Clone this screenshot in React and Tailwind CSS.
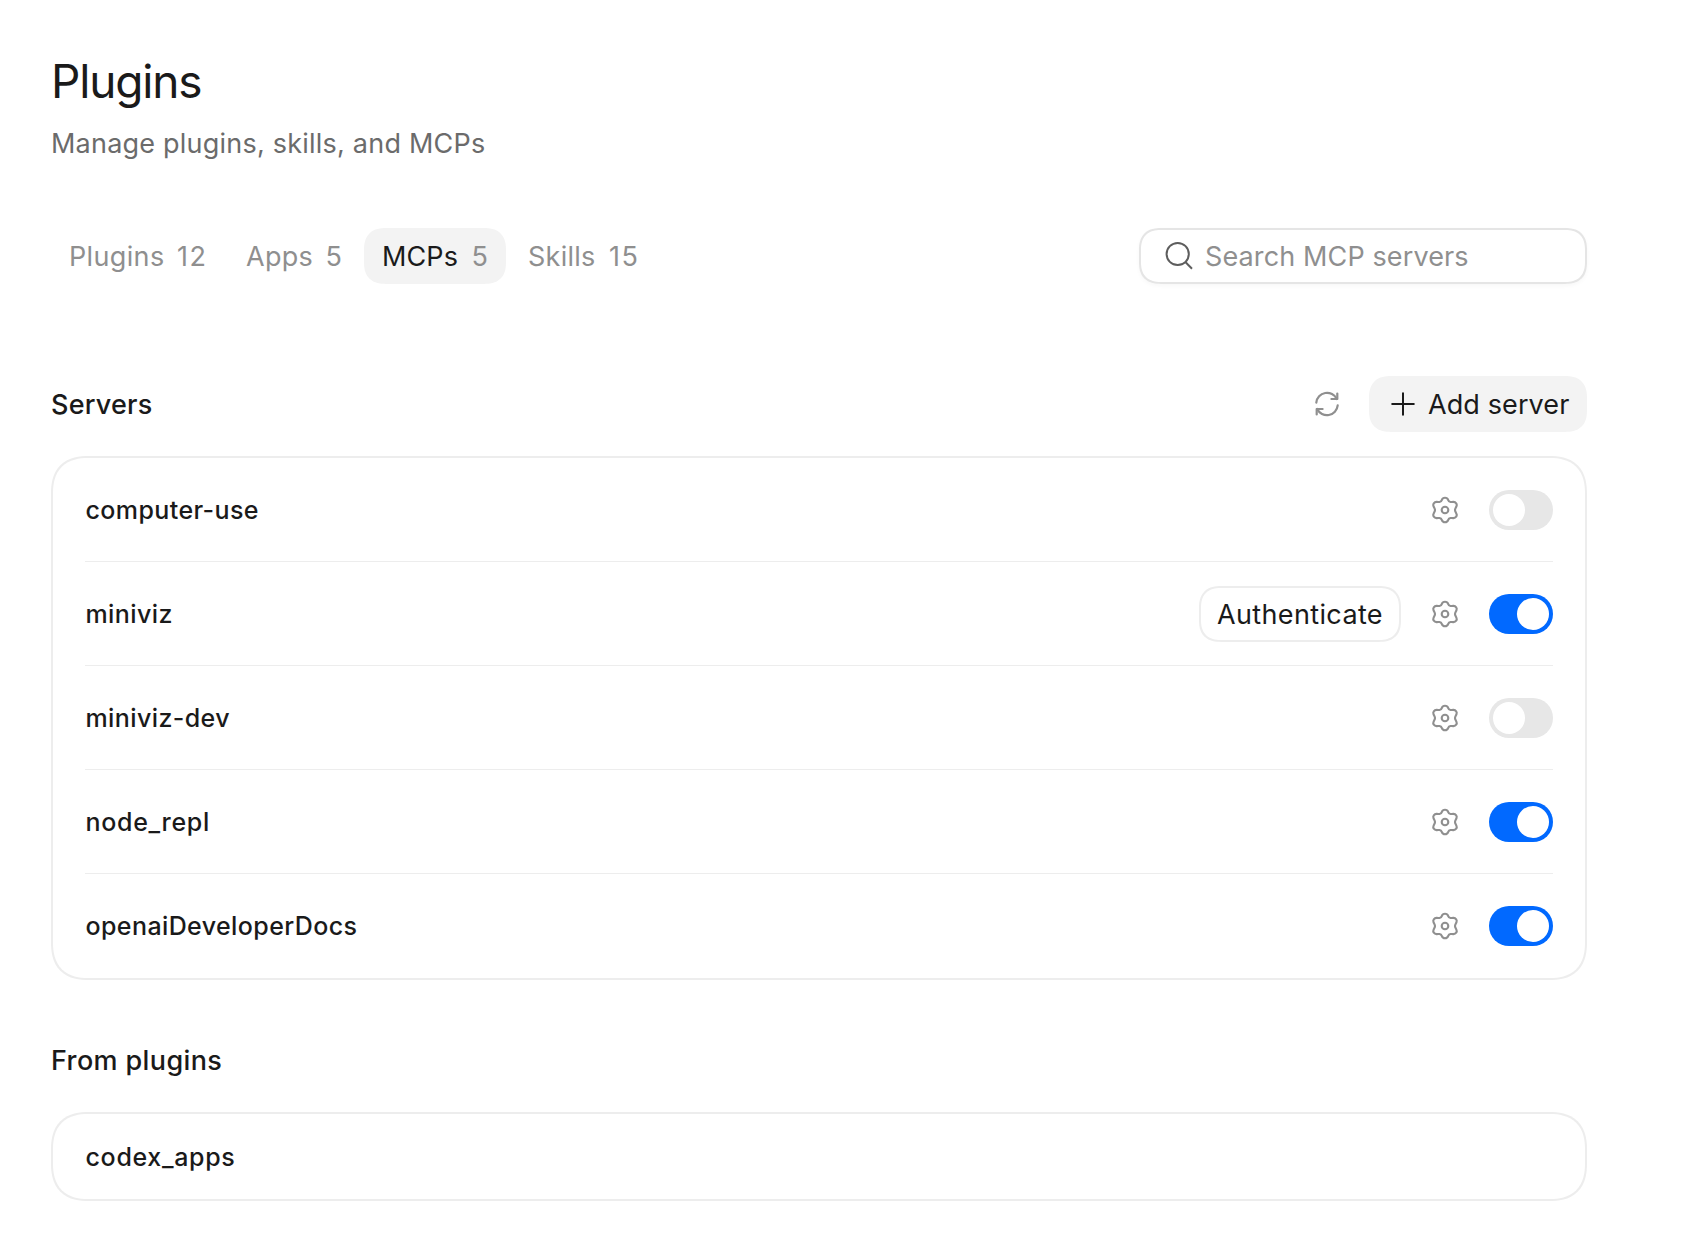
import React, { useState } from "react";

const tabs = [
  { name: "Plugins", count: 12, width: "w-[173px]", tracking: "tracking-[0.35px]" },
  { name: "Apps", count: 5, width: "w-[132px]", tracking: "tracking-[0.3px]" },
  { name: "MCPs", count: 5, width: "w-[142px]", tracking: "tracking-[0.1px]" },
  { name: "Skills", count: 15, width: "w-[146px]", tracking: "tracking-[0.25px]" },
];

const initialServers = [
  { name: "computer-use", enabled: false },
  { name: "miniviz", enabled: true, needsAuth: true },
  { name: "miniviz-dev", enabled: false },
  { name: "node_repl", enabled: true },
  { name: "openaiDeveloperDocs", enabled: true },
];

const SearchIcon = () => (
  <svg width="30" height="30" viewBox="0 0 30 30" fill="none" stroke="#5d5d5d" strokeWidth="2" className="shrink-0">
    <circle cx="13.7" cy="13" r="11.1" />
    <path d="M21.6 21.2 28 27.7" />
  </svg>
);

const RefreshIcon = () => (
  <svg width="28" height="28" viewBox="-14 -14 28 28" fill="none" stroke="#8f8f8f" strokeWidth="2.2" strokeLinecap="round" strokeLinejoin="round">
    <path d="M-10.7-1.4A10.8 10.8 0 0 1 9.8-5" />
    <path d="M10.3-10.5V-5H4.4" />
    <path d="M10.7 1.4A10.8 10.8 0 0 1-9.8 5" />
    <path d="M-10.3 10.5V5H-4.4" />
  </svg>
);

const PlusIcon = () => (
  <svg width="24" height="24" viewBox="0 0 24 24" fill="none" stroke="#1a1a1a" strokeWidth="2" strokeLinecap="round">
    <path d="M12 1.2v21.6M1.2 12h21.6" />
  </svg>
);

const GearIcon = () => (
  <svg width="28" height="28" viewBox="-14 -14 28 28" fill="none" stroke="#8f8f8f" strokeWidth="2.1" strokeLinejoin="round">
    <path d="M0-12.2C1.9-12.2 2.7-11.3 3.1-10.1C3.6-8.6 4.3-8.1 5.5-8C6.5-7.9 7.4-8.2 8.4-8.1C10.9-7.9 12.3-6 11.5-3.9C11.1-2.6 10-1.6 10 0C10 1.6 11.1 2.6 11.5 3.9C12.3 6 10.9 7.9 8.4 8.1C7.4 8.2 6.5 7.9 5.5 8C4.3 8.1 3.6 8.6 3.1 10.1C2.7 11.3 1.9 12.2 0 12.2C-1.9 12.2-2.7 11.3-3.1 10.1C-3.6 8.6-4.3 8.1-5.5 8C-6.5 7.9-7.4 8.2-8.4 8.1C-10.9 7.9-12.3 6-11.5 3.9C-11.1 2.6-10 1.6-10 0C-10-1.6-11.1-2.6-11.5-3.9C-12.3-6-10.9-7.9-8.4-8.1C-7.4-8.2-6.5-7.9-5.5-8C-4.3-8.1-3.6-8.6-3.1-10.1C-2.7-11.3-1.9-12.2 0-12.2Z" />
    <circle r="3.3" />
  </svg>
);

const Toggle = ({ on, onClick, label }) => (
  <button
    role="switch"
    aria-checked={on}
    aria-label={label}
    onClick={onClick}
    className={`flex h-10 w-16 items-center rounded-full px-1 ${on ? "justify-end bg-[#0169ff]" : "justify-start bg-[#e7e7e7]"}`}
  >
    <span className="size-8 rounded-full bg-white" />
  </button>
);

// names with an underscore are set a little wider
const ServerName = ({ name }) => (
  <span className={`pl-[0.5px] pt-0.5 text-[25px] font-medium ${name.includes("_") ? "tracking-[0.68px]" : "tracking-[0.4px]"}`}>
    {name}
  </span>
);

const App = () => {
  const [activeTab, setActiveTab] = useState("MCPs");
  const [servers, setServers] = useState(initialServers);

  const toggleServer = name => {
    setServers(servers.map(s => (s.name === name ? { ...s, enabled: !s.enabled } : s)));
  };

  return (
    <div className="min-h-screen bg-white pl-[51px] pr-[117px] pt-[53px] font-['Inter',sans-serif] text-[27px] text-[#1a1a1a]">
      <h1 className="h-14 text-[46px] leading-[56px] tracking-[-1.15px]">Plugins</h1>
      <p className="mt-[15px] h-10 leading-10 tracking-[0.22px] text-[#6b6b6b]">Manage plugins, skills, and MCPs</p>

      <div className="mt-16 flex items-center justify-between">
        <div className="flex gap-1">
          {tabs.map(tab => (
            <button
              key={tab.name}
              onClick={() => setActiveTab(tab.name)}
              className={`flex h-14 items-center justify-between rounded-[22px] px-[18px] pt-0.5 [corner-shape:superellipse(1.3)] ${tab.width} ${activeTab === tab.name ? "bg-[#f3f3f3]" : "text-[#8f8f8f]"}`}
            >
              <span className={tab.tracking}>{tab.name}</span>
              <span className="-mr-[1.6px] tracking-[1.6px] text-[#8f8f8f]">{tab.count}</span>
            </button>
          ))}
        </div>
        <div className="flex h-14 w-[448px] items-center gap-[11px] rounded-[22px] border-2 border-[#e5e5e5] pl-[23px] pr-4 shadow-[0_2px_4px_rgba(0,0,0,0.03)] [corner-shape:superellipse(1.3)]">
          <SearchIcon />
          <input
            type="text"
            placeholder="Search MCP servers"
            className="w-full pt-0.5 tracking-[0.12px] outline-none placeholder:text-[#8f8f8f]"
          />
        </div>
      </div>

      <div className="mt-[92px] flex h-14 items-center justify-between">
        <h2 className="pt-0.5 font-medium tracking-[0.2px]">Servers</h2>
        <div className="flex items-center gap-7">
          <button aria-label="Refresh">
            <RefreshIcon />
          </button>
          <button className="flex h-14 w-[218px] items-center gap-[13px] rounded-[22px] bg-[#f3f3f3] pl-[22px] [corner-shape:superellipse(1.3)]">
            <PlusIcon />
            <span className="whitespace-nowrap pt-0.5 tracking-[0.1px]">Add server</span>
          </button>
        </div>
      </div>

      <div className="mt-6 rounded-[38px] border-2 border-[#ededed] px-8 [corner-shape:superellipse(1.3)]">
        {servers.map(server => (
          <div
            key={server.name}
            className="flex h-[104px] items-center justify-between shadow-[inset_0_-1px_0_#ededed] last:shadow-none"
          >
            <ServerName name={server.name} />
            <div className="flex items-center gap-[30px]">
              {server.needsAuth && (
                <button className="h-14 w-[202px] rounded-[22px] border-2 border-[#ededed] pt-0.5 tracking-[0.36px] [corner-shape:superellipse(1.3)]">
                  Authenticate
                </button>
              )}
              <button aria-label="Settings">
                <GearIcon />
              </button>
              <Toggle on={server.enabled} label={server.name} onClick={() => toggleServer(server.name)} />
            </div>
          </div>
        ))}
      </div>

      <h2 className="mt-[61px] h-10 font-medium leading-10 tracking-[0.38px]">From plugins</h2>
      <div className="mt-[31px] flex h-[89px] items-center rounded-[38px] border-2 border-[#ededed] px-8 [corner-shape:superellipse(1.3)]">
        <ServerName name="codex_apps" />
      </div>
    </div>
  );
};

export default App;
